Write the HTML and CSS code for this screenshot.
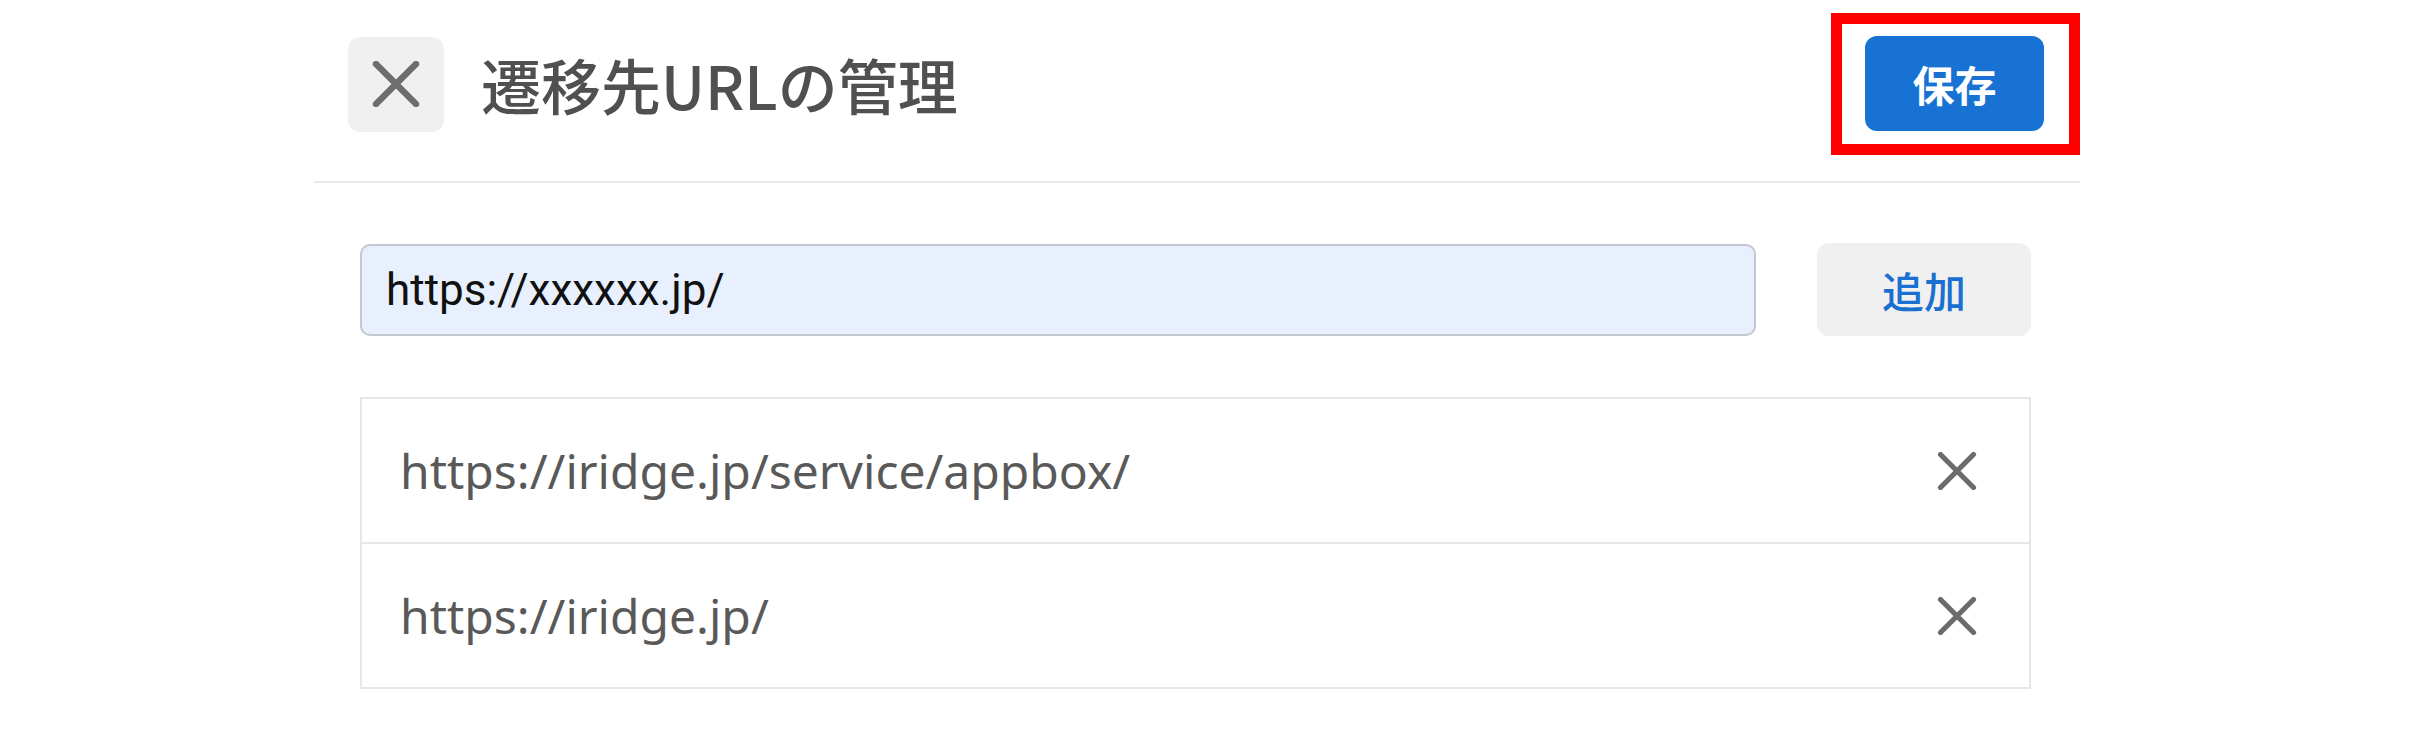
FILE: index.html
```html
<!DOCTYPE html>
<html lang="ja">
<head>
<meta charset="utf-8">
<title>遷移先URLの管理</title>
<link rel="stylesheet" href="styles.css">
</head>
<body>
<div class="panel">
  <header class="header">
    <button class="close-btn" type="button" aria-label="閉じる">
      <svg width="48" height="46" viewBox="0 0 48 46"><path d="M4 3 L44 43 M44 3 L4 43" stroke="#6e6e6e" stroke-width="6.5" stroke-linecap="round" fill="none"/></svg>
    </button>
    <h1 class="title">遷移先URLの管理</h1>
    <div class="highlight">
      <button class="save-btn" type="button">保存</button>
    </div>
  </header>
  <main class="content">
    <div class="add-row">
      <input class="url-input" type="text" value="https://xxxxxx.jp/">
      <button class="add-btn" type="button">追加</button>
    </div>
    <ul class="url-list">
      <li class="url-item">
        <span class="url-text">https://iridge.jp/service/appbox/</span>
        <button class="remove-btn" type="button" aria-label="削除">
          <svg width="40" height="38" viewBox="0 0 40 38"><path d="M3.5 2.5 L36.5 35.5 M36.5 2.5 L3.5 35.5" stroke="#6b6b6b" stroke-width="5.2" stroke-linecap="round" fill="none"/></svg>
        </button>
      </li>
      <li class="url-item">
        <span class="url-text">https://iridge.jp/</span>
        <button class="remove-btn" type="button" aria-label="削除">
          <svg width="40" height="38" viewBox="0 0 40 38"><path d="M3.5 2.5 L36.5 35.5 M36.5 2.5 L3.5 35.5" stroke="#6b6b6b" stroke-width="5.2" stroke-linecap="round" fill="none"/></svg>
        </button>
      </li>
    </ul>
  </main>
</div>
</body>
</html>
```
FILE: styles.css
```css
html, body {
  margin: 0;
  padding: 0;
  background: #ffffff;
}
body {
  font-family: "Noto Sans CJK JP", "Noto Sans", sans-serif;
}
.panel {
  width: 1766px;
  margin-left: 314px;
}
.header {
  display: flex;
  align-items: center;
  padding: 13px 0 26px 34px;
  border-bottom: 2px solid #e9e9ec;
}
.close-btn {
  width: 96px;
  height: 95px;
  border: none;
  border-radius: 12px;
  background: #f0f0f0;
  display: flex;
  align-items: center;
  justify-content: center;
  padding: 0;
}
.title {
  margin: 0 0 0 37px;
  flex: 1;
  font-family: "Noto Sans CJK JP", sans-serif;
  font-size: 60px;
  font-weight: 500;
  color: #505050;
  line-height: 1.2;
}
.highlight {
  border: 11px solid #ff0000;
  padding: 12px 25px 13px 23px;
  display: flex;
}
.save-btn {
  width: 179px;
  height: 95px;
  border: none;
  border-radius: 12px;
  background: #1872d3;
  color: #ffffff;
  font-family: "Noto Sans CJK JP", sans-serif;
  font-size: 42px;
  font-weight: 700;
  padding: 0;
}
.content {
  padding: 60px 49px 0 46px;
}
.add-row {
  display: flex;
  align-items: center;
  gap: 61px;
}
.url-input {
  flex: 1;
  height: 92px;
  box-sizing: border-box;
  border: 2px solid #c4c7ce;
  border-radius: 10px;
  background: #e8f0fe;
  padding: 0 24px;
  font-family: Roboto, "Noto Sans", sans-serif;
  font-size: 44px;
  color: #111111;
  outline: none;
}
.add-btn {
  width: 214px;
  height: 93px;
  border: none;
  border-radius: 12px;
  background: #f0f0f0;
  color: #1a6fd1;
  font-family: "Noto Sans CJK JP", sans-serif;
  font-size: 42px;
  font-weight: 500;
  padding: 0;
}
.url-list {
  list-style: none;
  margin: 61px 0 0 0;
  padding: 0;
  border: 2px solid #e6e6eb;
}
.url-item {
  display: flex;
  align-items: center;
  height: 143px;
  padding: 0 52px 0 38px;
}
.url-item + .url-item {
  border-top: 2px solid #e6e6eb;
}
.url-text {
  flex: 1;
  font-family: "Noto Sans", sans-serif;
  font-size: 48px;
  color: #595959;
}
.remove-btn {
  border: none;
  background: none;
  padding: 0;
  display: flex;
}
```
